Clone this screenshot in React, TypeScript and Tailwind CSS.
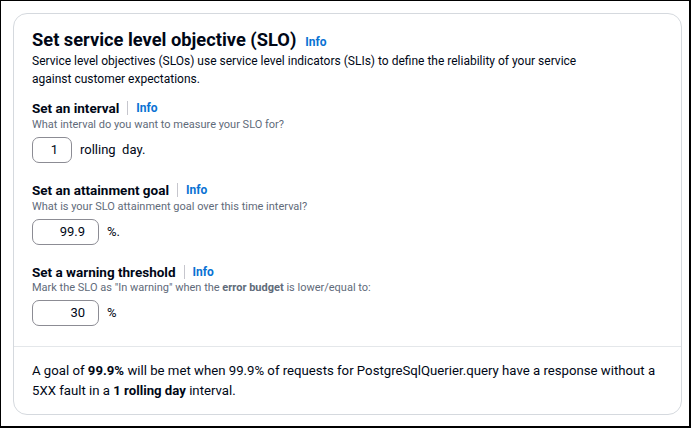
function Info() {
  return <span className="text-[12px] font-bold text-[#0972d3] leading-[16px]">Info</span>;
}

function Label({ text }: { text: string }) {
  return (
    <div className="flex items-center h-[16px] text-[13.5px] leading-[16px] font-bold text-[#000716]">
      <span>{text}</span>
      <span className="mx-[8px] h-[14px] w-px bg-[#c6c6cd]" />
      <Info />
    </div>
  );
}

function NumBox({ value, width, suffix }: { value: string; width: string; suffix: string }) {
  return (
    <div className="flex items-center gap-[8px] mt-[4px]">
      <div
        className={`${width} h-[26px] rounded-[7px] border-[1.5px] border-[#8c8c94] flex items-center justify-end pr-[13px] text-[13px] text-[#000716]`}
      >
        {value}
      </div>
      <span className="text-[13px] text-[#000716] whitespace-pre">{suffix}</span>
    </div>
  );
}

export default function App() {
  return (
    <div className="w-[694px] h-[430px] bg-white" style={{ fontFamily: "Roboto, 'Noto Sans', sans-serif" }}>
      <div className="w-[691px] h-[428px] border-l border-t border-r-2 border-b-2 border-black pl-[12px] pt-[12px]">
        <div className="w-[669px] h-[402px] rounded-[14px] border border-[#d5d9de] flex flex-col">
          <div className="px-[18px] pt-[15px] pb-[20px] border-b border-[#e4e7ea]">
            <div className="flex items-baseline gap-[9px] h-[22px]">
              <h1 className="text-[18.3px] leading-[22px] font-bold text-[#000716]">Set service level objective (SLO)</h1>
              <Info />
            </div>
            <p className="mt-px text-[12px] leading-[18px] text-[#000716]">
              Service level objectives (SLOs) use service level indicators (SLIs) to define the reliability of your service
              <br />
              against customer expectations.
            </p>

            <div className="mt-[12px]">
              <Label text="Set an interval" />
              <div className="mt-px text-[11px] leading-[16px] text-[#5f6b7a]">What interval do you want to measure your SLO for?</div>
              <NumBox value="1" width="w-[40px]" suffix={"rolling  day."} />
            </div>

            <div className="mt-[19px]">
              <Label text="Set an attainment goal" />
              <div className="mt-px text-[11px] leading-[16px] text-[#5f6b7a]">What is your SLO attainment goal over this time interval?</div>
              <NumBox value="99.9" width="w-[67px]" suffix="%." />
            </div>

            <div className="mt-[19px]">
              <Label text="Set a warning threshold" />
              <div className="text-[11px] leading-[16px] text-[#5f6b7a]">
                Mark the SLO as "In warning" when the <span className="font-bold">error budget</span> is lower/equal to:
              </div>
              <NumBox value="30" width="w-[67px]" suffix="%" />
            </div>
          </div>
          <div className="px-[18px] pt-[14px] text-[13.2px] leading-[20px] text-[#000716] whitespace-nowrap">
            A goal of <span className="font-bold">99.9%</span> will be met when 99.9% of requests for PostgreSqlQuerier.query have a response without a
            <br />
            5XX fault in a <span className="font-bold">1 rolling day</span> interval.
          </div>
        </div>
      </div>
    </div>
  );
}
